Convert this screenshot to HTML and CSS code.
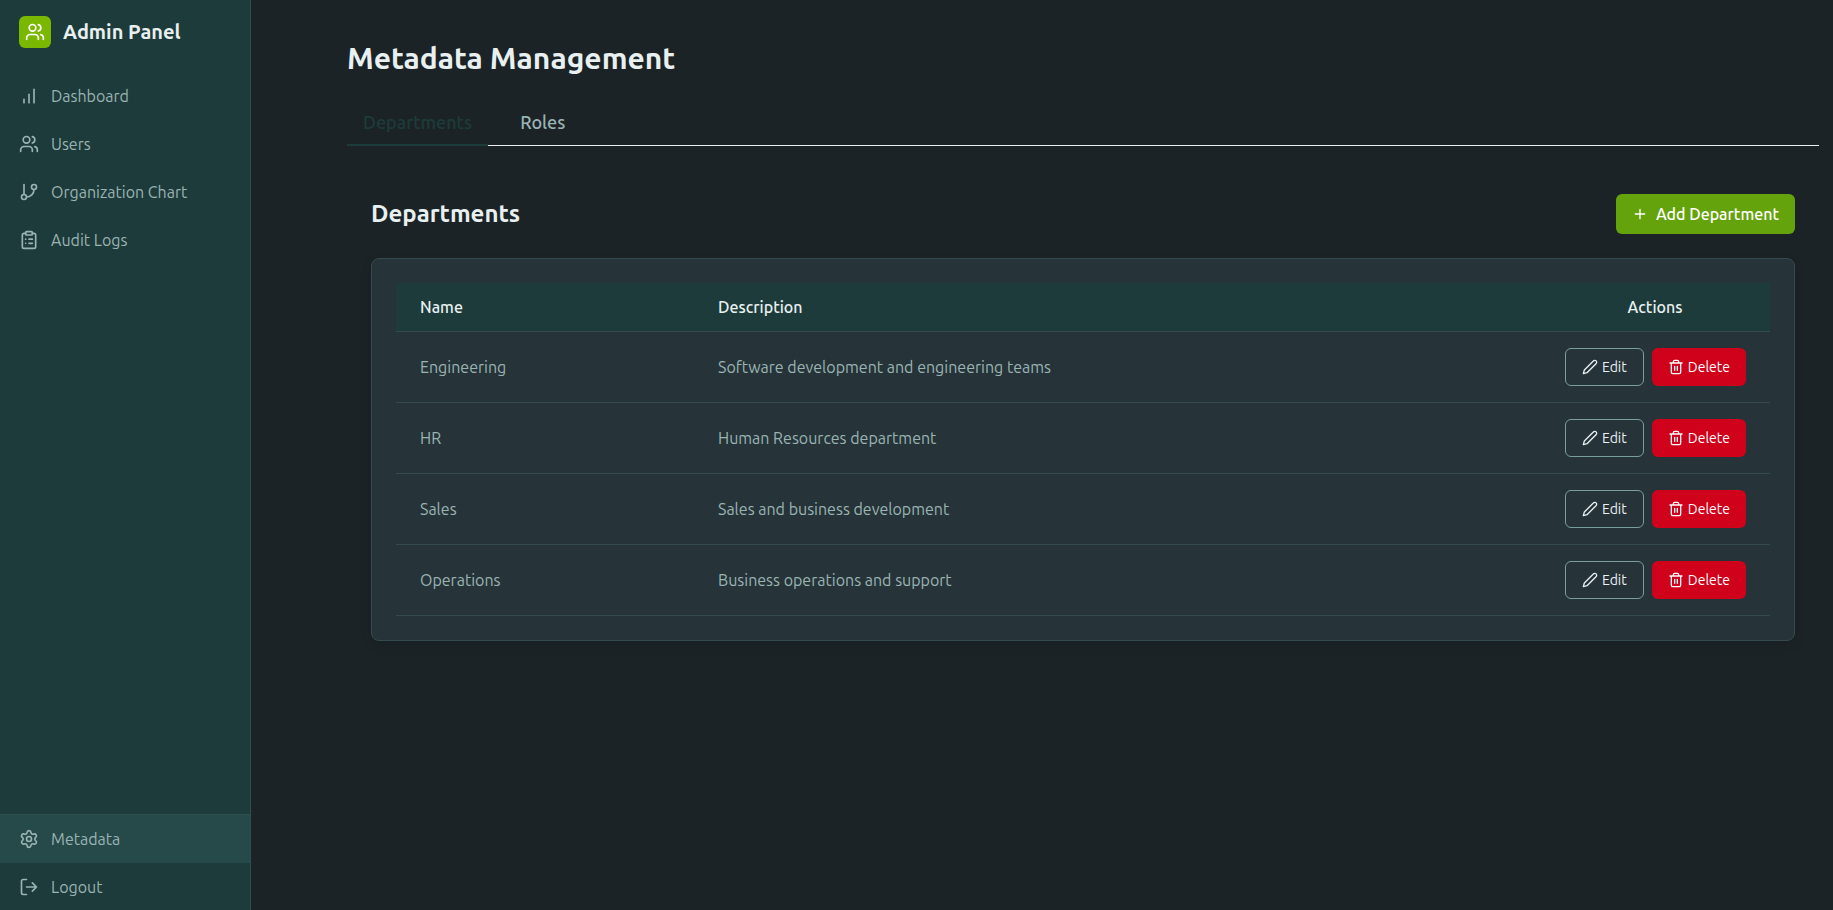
FILE: index.html
```html
<!DOCTYPE html>
<html lang="en">
<head>
<meta charset="utf-8">
<title>Metadata Management</title>
<link rel="stylesheet" href="styles.css">
</head>
<body>
<svg class="sprite" aria-hidden="true">
  <symbol id="i-users" viewBox="0 0 24 24"><path d="M16 21v-2a4 4 0 0 0-4-4H6a4 4 0 0 0-4 4v2"/><circle cx="9" cy="7" r="4"/><path d="M22 21v-2a4 4 0 0 0-3-3.87M16 3.13a4 4 0 0 1 0 7.75"/></symbol>
  <symbol id="i-chart" viewBox="0 0 24 24"><path d="M6 20v-4M12 20V10M18 20V4"/></symbol>
  <symbol id="i-branch" viewBox="0 0 24 24"><path d="M6 3v12"/><circle cx="18" cy="6" r="3"/><circle cx="6" cy="18" r="3"/><path d="M18 9a9 9 0 0 1-9 9"/></symbol>
  <symbol id="i-clipboard" viewBox="0 0 24 24"><rect x="8" y="2" width="8" height="4" rx="1"/><path d="M16 4h2a2 2 0 0 1 2 2v14a2 2 0 0 1-2 2H6a2 2 0 0 1-2-2V6a2 2 0 0 1 2-2h2M12 11h4M12 16h4M8 11h.01M8 16h.01"/></symbol>
  <symbol id="i-settings" viewBox="0 0 24 24"><path d="M9.67 4.14a2.34 2.34 0 0 1 4.66 0 2.34 2.34 0 0 0 3.32 1.91 2.34 2.34 0 0 1 2.33 4.03 2.34 2.34 0 0 0 0 3.84 2.34 2.34 0 0 1-2.33 4.03 2.34 2.34 0 0 0-3.32 1.91 2.34 2.34 0 0 1-4.66 0 2.34 2.34 0 0 0-3.32-1.91 2.34 2.34 0 0 1-2.33-4.03 2.34 2.34 0 0 0 0-3.84 2.34 2.34 0 0 1 2.33-4.03 2.34 2.34 0 0 0 3.32-1.91"/><circle cx="12" cy="12" r="3"/></symbol>
  <symbol id="i-logout" viewBox="0 0 24 24"><path d="M9 21H5a2 2 0 0 1-2-2V5a2 2 0 0 1 2-2h4M16 17l5-5-5-5M21 12H9"/></symbol>
  <symbol id="i-plus" viewBox="0 0 24 24"><path d="M5 12h14M12 5v14"/></symbol>
  <symbol id="i-pencil" viewBox="0 0 24 24"><path d="M17 3a2.85 2.83 0 1 1 4 4L7.5 20.5 2 22l1.5-5.5Z"/></symbol>
  <symbol id="i-trash" viewBox="0 0 24 24"><path d="M3 6h18M19 6v14a2 2 0 0 1-2 2H7a2 2 0 0 1-2-2V6M8 6V4a2 2 0 0 1 2-2h4a2 2 0 0 1 2 2v2M10 11v6M14 11v6"/></symbol>
</svg>
<div class="app">
  <aside class="sidebar">
    <div class="brand">
      <span class="brand-logo"><svg class="icon"><use href="#i-users"/></svg></span>
      <span class="brand-name">Admin Panel</span>
    </div>
    <nav class="nav" aria-label="Main">
      <a class="nav-link" href="#dashboard"><svg class="icon"><use href="#i-chart"/></svg>Dashboard</a>
      <a class="nav-link" href="#users"><svg class="icon"><use href="#i-users"/></svg>Users</a>
      <a class="nav-link" href="#organization"><svg class="icon"><use href="#i-branch"/></svg>Organization Chart</a>
      <a class="nav-link" href="#audit"><svg class="icon"><use href="#i-clipboard"/></svg>Audit Logs</a>
    </nav>
    <div class="nav-footer">
      <a class="nav-link active" href="#metadata"><svg class="icon"><use href="#i-settings"/></svg>Metadata</a>
      <button class="nav-link logout" type="button"><svg class="icon"><use href="#i-logout"/></svg>Logout</button>
    </div>
  </aside>
  <main class="main">
    <h1 class="page-title">Metadata Management</h1>
    <div class="tabs" role="tablist">
      <button class="tab selected" type="button" role="tab" aria-selected="true">Departments</button>
      <button class="tab" type="button" role="tab" aria-selected="false">Roles</button>
    </div>
    <section class="panel">
      <div class="panel-head">
        <h2 class="panel-title">Departments</h2>
        <button class="btn btn-primary" type="button"><svg class="icon icon-sm"><use href="#i-plus"/></svg>Add Department</button>
      </div>
      <div class="card">
        <table class="table">
          <thead>
            <tr><th class="col-name">Name</th><th>Description</th><th class="col-actions">Actions</th></tr>
          </thead>
          <tbody>
            <tr><td>Engineering</td><td>Software development and engineering teams</td><td><div class="actions"><button class="btn btn-small btn-edit" type="button"><svg class="icon icon-sm"><use href="#i-pencil"/></svg>Edit</button><button class="btn btn-small btn-delete" type="button"><svg class="icon icon-sm"><use href="#i-trash"/></svg>Delete</button></div></td></tr>
            <tr><td>HR</td><td>Human Resources department</td><td><div class="actions"><button class="btn btn-small btn-edit" type="button"><svg class="icon icon-sm"><use href="#i-pencil"/></svg>Edit</button><button class="btn btn-small btn-delete" type="button"><svg class="icon icon-sm"><use href="#i-trash"/></svg>Delete</button></div></td></tr>
            <tr><td>Sales</td><td>Sales and business development</td><td><div class="actions"><button class="btn btn-small btn-edit" type="button"><svg class="icon icon-sm"><use href="#i-pencil"/></svg>Edit</button><button class="btn btn-small btn-delete" type="button"><svg class="icon icon-sm"><use href="#i-trash"/></svg>Delete</button></div></td></tr>
            <tr><td>Operations</td><td>Business operations and support</td><td><div class="actions"><button class="btn btn-small btn-edit" type="button"><svg class="icon icon-sm"><use href="#i-pencil"/></svg>Edit</button><button class="btn btn-small btn-delete" type="button"><svg class="icon icon-sm"><use href="#i-trash"/></svg>Delete</button></div></td></tr>
          </tbody>
        </table>
      </div>
    </section>
  </main>
</div>
</body>
</html>
```
FILE: styles.css
```css
* { box-sizing: border-box; }

body {
  margin: 0;
  background: #1b2326;
  color: #e8f0f0;
  font-family: Ubuntu, "Noto Sans", sans-serif;
  font-size: 16px;
  line-height: 24px;
}

button {
  margin: 0;
  border: 0;
  background: none;
  color: inherit;
  font: inherit;
  cursor: pointer;
}

.sprite { position: absolute; width: 0; height: 0; }

.icon {
  flex: none;
  width: 20px;
  height: 20px;
  fill: none;
  stroke: currentColor;
  stroke-width: 2;
  stroke-linecap: round;
  stroke-linejoin: round;
}

.icon-sm { width: 16px; height: 16px; }

.app { display: flex; min-height: 100vh; }

.sidebar {
  display: flex;
  flex: none;
  flex-direction: column;
  width: 251px;
  border-right: 1px solid #2f4f4f;
  background: #1d3b3a;
}

.brand {
  display: flex;
  align-items: center;
  gap: 12px;
  padding: 16px 19px 24px;
}

.brand-logo {
  display: grid;
  place-items: center;
  width: 32px;
  height: 32px;
  border-radius: 6px;
  background: #7ab800;
  color: #fff;
}

.brand-name { font-size: 20px; font-weight: 600; }

.nav-link {
  display: flex;
  align-items: center;
  gap: 12px;
  width: 100%;
  padding: 12px 19px;
  color: #9ab3b3;
  font-weight: 400;
  text-decoration: none;
}

.nav-link.active { background: #264a4a; }

.nav-link.logout { padding-bottom: 11px; }

.nav-footer { margin-top: auto; border-top: 1px solid #2f4f4f; }

.main { flex: 1; min-width: 0; padding: 40px 14px 40px 96px; }

.page-title {
  margin: 0 0 24px;
  font-size: 30px;
  font-weight: 600;
  line-height: 36px;
}

.tabs {
  display: flex;
  gap: 16px;
  border-bottom: 1px solid #e8f0f0;
}

.tab {
  margin-bottom: -1px;
  padding: 9px 16px;
  border-bottom: 2px solid transparent;
  color: #9ab3b3;
  font-size: 18px;
  font-weight: 500;
  line-height: 26px;
}

.tab.selected { border-color: #1d3b3a; color: #1d3b3a; }

.panel { padding: 48px 24px 0; }

.panel-head {
  display: flex;
  align-items: center;
  justify-content: space-between;
  margin-bottom: 24px;
}

.panel-title { margin: 0; font-size: 24px; font-weight: 600; line-height: 32px; }

.btn {
  display: inline-flex;
  align-items: center;
  justify-content: center;
  gap: 8px;
  padding: 8px 16px;
  border-radius: 6px;
  font-weight: 500;
  white-space: nowrap;
}

.btn-primary { background: #65a30d; color: #fff; }

.btn-small {
  gap: 4px;
  padding: 9px 16px;
  font-size: 14px;
  font-weight: 400;
  line-height: 20px;
}

.btn-edit { padding: 8px 16px; border: 1px solid #7a9e9e; }

.btn-delete { background: #d0021b; color: #fff; }

.card {
  padding: 24px;
  border: 1px solid #354a4f;
  border-radius: 8px;
  background: #263338;
  box-shadow: 0 4px 12px rgba(0, 0, 0, 0.1);
}

.table { width: 100%; border-collapse: separate; border-spacing: 0; }

.table th {
  padding: 12px 24px;
  border-bottom: 1px solid #354a4f;
  background: #1d3b3a;
  font-weight: 500;
  text-align: left;
}

.table td {
  padding: 16px 24px;
  border-bottom: 1px solid #354a4f;
  color: #9ab3b3;
  font-weight: 400;
}

.table .col-name { width: 298px; }

.table .col-actions { width: 230px; text-align: center; }

.actions { display: flex; justify-content: flex-end; gap: 8px; color: #e8f0f0; }
```
